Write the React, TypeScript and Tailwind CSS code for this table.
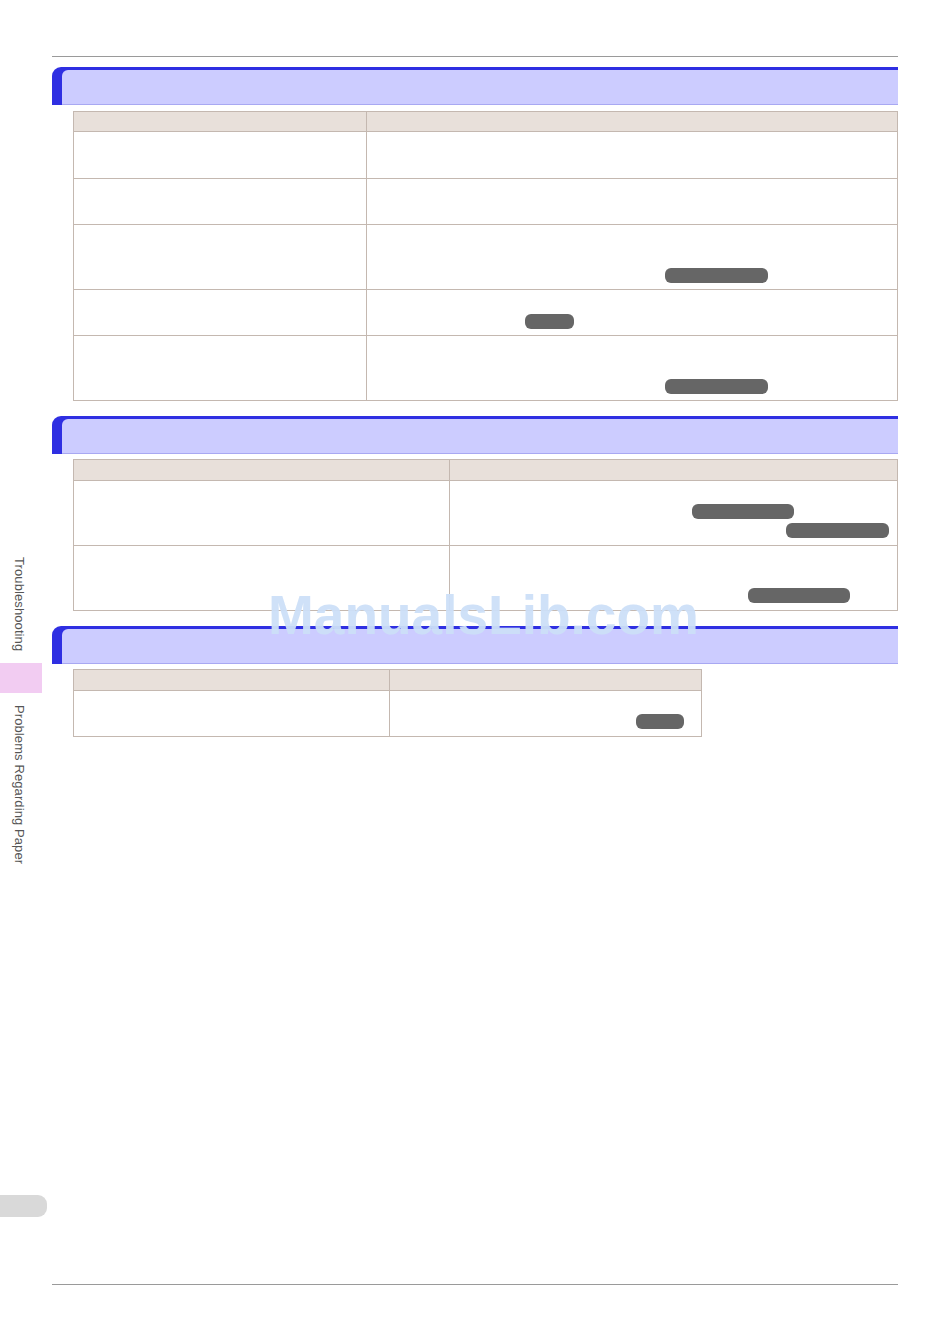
type Pill = { ml: number; mt: number; w: number };
type Row = { h: number; pills?: Pill[] };
type Section = {
  gapTop: number;
  gapTable: number;
  tableW: number;
  colW: number;
  headH: number;
  rows: Row[];
};

// Page layout measured off the manual page; text blocks are blank in the source
const SECTIONS: Section[] = [
  {
    gapTop: 10,
    gapTable: 6,
    tableW: 825,
    colW: 293,
    headH: 20,
    rows: [
      { h: 47 },
      { h: 46 },
      { h: 65, pills: [{ ml: 298, mt: 43, w: 103 }] },
      { h: 46, pills: [{ ml: 158, mt: 24, w: 49 }] },
      { h: 65, pills: [{ ml: 298, mt: 43, w: 103 }] },
    ],
  },
  {
    gapTop: 15,
    gapTable: 5,
    tableW: 825,
    colW: 376,
    headH: 21,
    rows: [
      {
        h: 65,
        pills: [
          { ml: 242, mt: 23, w: 102 },
          { ml: 336, mt: 4, w: 103 },
        ],
      },
      { h: 65, pills: [{ ml: 298, mt: 42, w: 102 }] },
    ],
  },
  {
    gapTop: 15,
    gapTable: 5,
    tableW: 629,
    colW: 316,
    headH: 21,
    rows: [{ h: 46, pills: [{ ml: 246, mt: 23, w: 48 }] }],
  },
];

function SectionHeader() {
  return (
    <div className="h-[38px] rounded-tl-[9px] bg-[#2f2fe2] pt-[3px] pl-[10px]">
      <div className="h-full rounded-tl-[6px] bg-[#ccccff] border-b border-[#a8a8f2]" />
    </div>
  );
}

function LinkPill({ ml, mt, w }: Pill) {
  return (
    <div
      className="h-[15px] rounded-[6px] bg-[#666666]"
      style={{ marginLeft: ml, marginTop: mt, width: w }}
    />
  );
}

function InfoTable({ s }: { s: Section }) {
  return (
    <div
      className="ml-[21px] border-t border-l border-r border-[#c4b8b0]"
      style={{ width: s.tableW, marginTop: s.gapTable }}
    >
      <div className="flex bg-[#e8e0da] border-b border-[#c4b8b0]" style={{ height: s.headH }}>
        <div className="border-r border-[#c4b8b0] shrink-0" style={{ width: s.colW }} />
        <div className="flex-1" />
      </div>
      {s.rows.map((r, i) => (
        <div key={i} className="flex border-b border-[#c4b8b0]" style={{ height: r.h }}>
          <div className="border-r border-[#c4b8b0] shrink-0" style={{ width: s.colW }} />
          <div className="flex-1 flex flex-col items-start">
            {r.pills?.map((p, j) => <LinkPill key={j} {...p} />)}
          </div>
        </div>
      ))}
    </div>
  );
}

export default function App() {
  return (
    <div className="relative w-[950px] h-[1341px] bg-white overflow-hidden flex font-['Liberation_Sans',Arial,sans-serif]">
      {/* Side tab */}
      <div className="w-[52px] shrink-0 flex flex-col pt-[557px]">
        <div className="h-[106px] pl-[12px]">
          <span className="[writing-mode:vertical-rl] text-[13px] leading-[14px] text-[#555555] tracking-[0.1px]">
            Troubleshooting
          </span>
        </div>
        <div className="w-[42px] h-[30px] bg-[#f2ccf2]" />
        <div className="mt-[12px] pl-[12px]">
          <span className="[writing-mode:vertical-rl] text-[13px] leading-[14px] text-[#555555] tracking-[0.1px]">
            Problems Regarding Paper
          </span>
        </div>
        <div className="mt-auto mb-[124px] w-[47px] h-[22px] rounded-r-[9px] bg-[#d9d9d9]" />
      </div>

      {/* Page body */}
      <div className="w-[846px] flex flex-col pt-[56px]">
        <div className="border-t border-[#9a9a9a]" />
        {SECTIONS.map((s, i) => (
          <div key={i} style={{ marginTop: s.gapTop }}>
            <SectionHeader />
            <InfoTable s={s} />
          </div>
        ))}
        <div className="mt-auto mb-[56px] border-t border-[#9a9a9a]" />
      </div>

      {/* Watermark */}
      <div className="absolute left-[268px] top-[588px] text-[55px] leading-none font-bold text-[#cde0f8] opacity-95 font-['Liberation_Sans',Arial,sans-serif] pointer-events-none">
        ManualsLib.com
      </div>
    </div>
  );
}
